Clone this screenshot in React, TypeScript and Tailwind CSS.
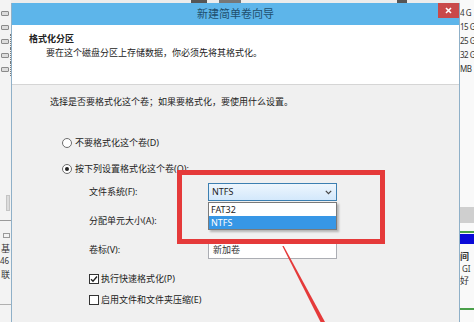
const LEFT_ICONS = [0, 1, 2, 3, 4];
const RIGHT_SIZES = ['4 G', '15 G', '25 G', '32 G', 'MB'];

function DriveIcon() {
  return (
    <div className="w-[8px] h-[5px] border border-[#8a8a8a] bg-[#dcdcdc] rounded-[1px]" />
  );
}

function LeftStrip() {
  return (
    <div className="w-[11px] h-full flex flex-col bg-[#f3f3f3] text-[9px] leading-[12px] text-[#333] overflow-hidden">
      <div className="h-[6px]" />
      {LEFT_ICONS.map((i) => (
        <div
          key={i}
          className={`h-[14px] flex items-center pl-[1px] ${i > 1 ? 'border-r border-dotted border-[#777]' : ''}`}
        >
          <DriveIcon />
        </div>
      ))}
      <div className="h-[118px]" />
      <div className="h-[18px] flex items-center justify-end pr-[1px]">
        <div className="w-[4px] h-[16px] bg-[#dcdcdc] border border-[#c4c4c4]" />
      </div>
      <div className="h-[9px] border-b border-[#9a9a9a]" />
      <div className="h-[12px]" />
      <div className="ml-[3px] w-[7px] h-[5px] border border-[#9a9a9a]" />
      <div className="mt-[5px] ml-[1px]">基</div>
      <div className="ml-[0px] text-[8px]">46</div>
      <div className="mt-[2px] ml-[1px]">联</div>
      <div className="h-[24px] border-b border-[#b0b0b0]" />
    </div>
  );
}

function RightStrip() {
  return (
    <div className="flex-1 h-full flex flex-col bg-[#f9f9f9] text-[8px] leading-[12px] text-[#333] overflow-hidden">
      <div className="h-[6px]" />
      {RIGHT_SIZES.map((s) => (
        <div key={s} className="h-[14px] flex items-center whitespace-nowrap tracking-[-0.5px]">
          {s}
        </div>
      ))}
      <div className="h-[131px]" />
      <div className="h-[16px] bg-[#cfcfcf]" />
      <div className="h-[8px]" />
      <div className="h-[2px] bg-[#4aa04a]" />
      <div className="h-[1px]" />
      <div className="h-[10px] bg-[#0a0ad8]" />
      <div className="h-[7px]" />
      <div className="font-bold text-[9px]">间</div>
      <div className="ml-[2px] whitespace-nowrap">GI</div>
      <div className="text-[9px]">好</div>
      <div className="h-[23px] border-b-2 border-[#4aa04a]" />
    </div>
  );
}

function Radio({ checked, label }: { checked?: boolean; label: string }) {
  return (
    <div className="h-[16px] ml-[50px] flex items-center gap-[3px]">
      <div className="w-[10px] h-[10px] rounded-full border border-[#6d6d6d] bg-white flex items-center justify-center">
        {checked && <div className="w-[4px] h-[4px] rounded-full bg-[#222]" />}
      </div>
      <span>{label}</span>
    </div>
  );
}

function Checkbox({ checked, label }: { checked?: boolean; label: string }) {
  return (
    <div className="h-[12px] ml-[77px] flex items-center gap-[2px]">
      <div className="w-[10px] h-[10px] border border-[#333] bg-white flex items-center justify-center">
        {checked && (
          <svg width="8" height="8" viewBox="0 0 8 8">
            <path d="M1 4.2 L3 6.2 L7 1.5" fill="none" stroke="#222" strokeWidth="1.4" />
          </svg>
        )}
      </div>
      <span>{label}</span>
    </div>
  );
}

function FieldRow({ label, height, children }: { label: string; height: string; children?: React.ReactNode }) {
  return (
    <div className={`${height} ml-[77px] flex items-center`}>
      <span className="w-[119px]">{label}</span>
      {children}
    </div>
  );
}

function FileSystemSelect() {
  return (
    <div className="relative z-10">
      <div className="w-[129px] h-[18px] border border-[#3c7fb1] bg-gradient-to-b from-[#eef6fd] to-[#d3e8fb] flex items-center justify-between pl-[3px] pr-[4px]">
        <span className="font-['Noto_Sans',sans-serif] text-[9px]">NTFS</span>
        <svg width="7" height="5" viewBox="0 0 7 5">
          <path d="M0.8 0.8 L3.5 3.6 L6.2 0.8" fill="none" stroke="#444" strokeWidth="1.2" />
        </svg>
      </div>
      <div className="absolute left-0 top-[19px] w-[129px] border border-[#7a7a7a] bg-white shadow-[2px_2px_2px_rgba(0,0,0,0.25)] font-['Noto_Sans',sans-serif] text-[9px]">
        <div className="h-[13px] flex items-center pl-[2px]">FAT32</div>
        <div className="h-[13px] flex items-center pl-[2px] bg-[#3797e6] text-white">NTFS</div>
      </div>
    </div>
  );
}

export default function App() {
  return (
    <div className="relative w-[474px] h-[322px] overflow-hidden flex bg-[#f0f0f0] text-[#222] font-['Noto_Sans','Noto_Sans_CJK_SC',sans-serif]">
      <LeftStrip />

      <div className="w-[449px] h-full flex flex-col">
        <div className="h-[3px] bg-[#ececec] flex">
          <div className="ml-[180px] w-[16px] bg-[#555]" />
          <div className="ml-[12px] w-[22px] bg-[#777]" />
          <div className="ml-[156px] w-[10px] bg-[#555]" />
        </div>

        <div className="flex-1 flex flex-col border-x border-[#8fb0c8] bg-[#f0f0f0]">
          <div className="relative h-[22px] bg-[#5db5ea] flex items-center justify-center">
            <span className="text-[11px] text-[#1f4f6e]">新建简单卷向导</span>
            <div className="absolute right-0 top-0 w-[21px] h-[15px] bg-[#c9494a] flex items-center justify-center">
              <svg width="7" height="7" viewBox="0 0 7 7">
                <path d="M1 1 L6 6 M6 1 L1 6" stroke="#fff" strokeWidth="1.6" />
              </svg>
            </div>
          </div>

          <div className="h-[60px] bg-white border-b border-[#d5d5d5] pt-[8px] text-[9px] leading-[12px]">
            <div className="pl-[17px] font-bold">格式化分区</div>
            <div className="pl-[34px] mt-[2px]">要在这个磁盘分区上存储数据，你必须先将其格式化。</div>
          </div>

          <div className="flex flex-col pt-[11px] text-[9px] leading-[12px]">
            <div className="ml-[38px] h-[12px]">选择是否要格式化这个卷；如果要格式化，要使用什么设置。</div>
            <div className="mt-[27px]">
              <Radio label="不要格式化这个卷(D)" />
            </div>
            <div className="mt-[10px]">
              <Radio checked label="按下列设置格式化这个卷(O):" />
            </div>
            <div className="mt-[6px]">
              <FieldRow label="文件系统(F):" height="h-[18px]">
                <FileSystemSelect />
              </FieldRow>
            </div>
            <div className="mt-[11px]">
              <FieldRow label="分配单元大小(A):" height="h-[18px]" />
            </div>
            <div className="mt-[10px]">
              <FieldRow label="卷标(V):" height="h-[19px]">
                <div className="w-[129px] h-[19px] border border-[#abadb3] bg-white flex items-center pl-[4px] text-[#333]">
                  新加卷
                </div>
              </FieldRow>
            </div>
            <div className="mt-[14px]">
              <Checkbox checked label="执行快速格式化(P)" />
            </div>
            <div className="mt-[9px]">
              <Checkbox label="启用文件和文件夹压缩(E)" />
            </div>
          </div>
        </div>
      </div>

      <RightStrip />

      <div className="absolute left-[177px] top-[170px] w-[208px] h-[74px] border-[5px] border-[#e53a3a] z-20 pointer-events-none" />
      <svg className="absolute left-0 top-0 z-20 pointer-events-none" width="474" height="322" viewBox="0 0 474 322">
        <polygon points="282.3,246 283.7,246 325,322 320.5,322" fill="#e53a3a" />
      </svg>
    </div>
  );
}
